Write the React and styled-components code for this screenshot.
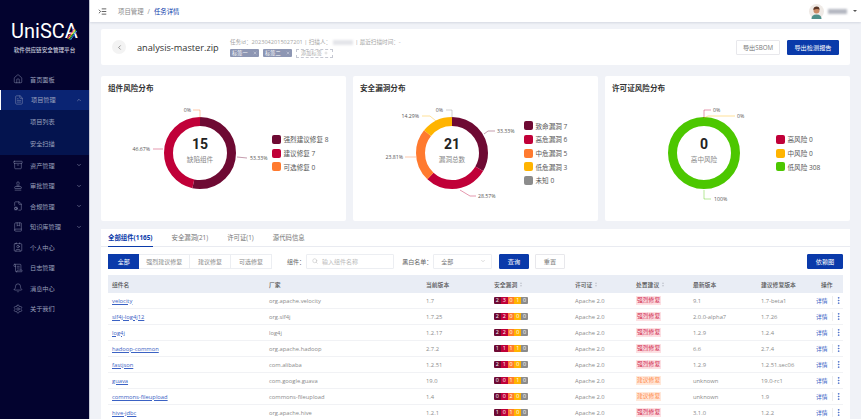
import React from 'react';
import styled, { createGlobalStyle } from 'styled-components';
import {
    House, FileText, Archive, Stamp, FileCog, BookMarked, Contact, ScrollText, Bell, Settings,
    ChevronUp, ChevronDown, ChevronLeft, Search, EllipsisVertical, Indent, X, Plus
} from 'lucide-react';

const FONT = '"Open Sans", "Noto Sans CJK SC", sans-serif';
const BLUE = '#0a3aaa';
const COLORS = {
    dark: '#6e0a33',
    red: '#c00038',
    orange: '#ff7a2f',
    yellow: '#ffb400',
    gray: '#8c8c8c',
    green: '#4cc700'
};

const GlobalStyle = createGlobalStyle`
    html, body {
        margin: 0;
        height: 419px;
        overflow: hidden;
        background: #f0f2f7;
        font-family: ${FONT};
    }
    * {
        box-sizing: border-box;
    }
`;

const Page = styled.div`
    display: flex;
    width: 861px;
    height: 419px;
    overflow: hidden;
`;

const Sidebar = styled.aside`
    flex: 0 0 90px;
    background: #03032f;
    border-right: 1px solid #c9ccd8;
    color: #9aa0bc;
`;

const Logo = styled.div`
    position: relative;
    height: 69px;
    padding-top: 18px;
    text-align: center;
`;

const LogoName = styled.div`
    color: #fff;
    font-family: Roboto, sans-serif;
    font-size: 20px;
    font-weight: 400;
    line-height: 26px;
`;

const LogoSub = styled.div`
    margin-top: 2px;
    color: #c5c9da;
    font-size: 5.6px;
    font-weight: 500;
    line-height: 8px;
    white-space: nowrap;
`;

const Rainbow = styled.svg`
    position: absolute;
    left: 67px;
    top: 28px;
`;

const MenuRow = styled.div`
    display: flex;
    align-items: center;
    height: ${props => props.$sub ? '21.5px' : '20.5px'};
    padding-left: ${props => props.$sub ? '30px' : '13px'};
    background: ${props => props.$active ? '#0a2473' : props.$sub ? '#04144f' : 'transparent'};
    border-left: ${props => props.$active ? '1px solid #fff' : 'none'};
    font-size: 6.2px;

    & > svg:first-child {
        flex: none;
        margin-right: 7px;
    }
`;

const MenuChevron = styled.span`
    display: flex;
    margin-left: auto;
    margin-right: 7px;
`;

const SubGroup = styled.div`
    padding: 1px 0;
    background: #04144f;
`;

const Main = styled.main`
    flex: 1;
    min-width: 0;
    display: flex;
    flex-direction: column;
`;

const Topbar = styled.header`
    flex: 0 0 22px;
    display: flex;
    align-items: center;
    padding: 0 4px 0 8px;
    background: #fff;
    box-shadow: 0 1px 2px rgba(20, 30, 70, 0.12);
    font-size: 6.4px;
    color: #888;
`;

const Crumbs = styled.div`
    display: flex;
    gap: 4px;
    margin-left: 11px;

    & b {
        font-weight: 400;
        color: ${BLUE};
    }
`;

const UserBox = styled.div`
    display: flex;
    align-items: center;
    margin-left: auto;
    gap: 4px;
`;

const BlurName = styled.span`
    display: inline-block;
    width: ${props => props.$w}px;
    height: 5px;
    background: ${props => props.$c || '#b5b8c2'};
    filter: blur(1.2px);
`;

const Caret = styled.span`
    width: 0;
    height: 0;
    margin-left: 2px;
    border: 2px solid transparent;
    border-top: 2.5px solid #555;
    border-bottom: 0;
`;

const Content = styled.div`
    flex: 1;
    display: flex;
    flex-direction: column;
    padding: 7px 11px 0 11px;
`;

const HeaderCard = styled.section`
    flex: 0 0 36px;
    display: flex;
    align-items: center;
    padding: 0 11px 0 11px;
    margin-bottom: 11px;
    background: #fff;
    border-radius: 2px;
`;

const BackButton = styled.span`
    display: flex;
    align-items: center;
    justify-content: center;
    width: 14px;
    height: 14px;
    border-radius: 50%;
    background: #f3f3f3;
    color: #555;
`;

const FileName = styled.h1`
    width: 81px;
    margin: 0 12px 0 11px;
    font-size: 9.2px;
    font-weight: 400;
    color: #333;
    white-space: nowrap;
`;

const Meta = styled.div`
    display: flex;
    flex-direction: column;
    gap: 3px;
    margin-top: 2px;
`;

const MetaLine = styled.div`
    display: flex;
    align-items: center;
    gap: 2px;
    font-size: 5.6px;
    line-height: 7px;
    color: #a5a5a5;
    white-space: nowrap;
`;

const TagLine = styled.div`
    display: flex;
    gap: 4px;
`;

const Tag = styled.span`
    display: flex;
    align-items: center;
    justify-content: space-between;
    width: 29px;
    height: 8px;
    padding: 0 2px;
    border-radius: 1px;
    background: #8d96b3;
    color: #fff;
    font-size: 5.2px;
`;

const AddTag = styled.span`
    display: flex;
    align-items: center;
    justify-content: center;
    gap: 2px;
    width: 37px;
    height: 9px;
    border: 1px dashed #c5c8d2;
    color: #aaa;
    font-size: 5.2px;
`;

const HeaderActions = styled.div`
    display: flex;
    gap: 7px;
    margin-left: auto;
`;

const Button = styled.button`
    width: ${props => props.$w}px;
    height: 15px;
    padding: 0;
    border: 1px solid ${props => props.$primary ? BLUE : '#e8e8ec'};
    border-radius: 1px;
    background: ${props => props.$primary ? BLUE : '#fff'};
    color: ${props => props.$primary ? '#fff' : '#777'};
    font-family: ${FONT};
    font-size: 6.2px;
`;

const ChartRow = styled.div`
    flex: 0 0 145px;
    display: grid;
    grid-template-columns: repeat(3, 245px);
    gap: 7px;
    margin-bottom: 8px;
`;

const ChartCard = styled.section`
    background: #fff;
    border-radius: 2px;
`;

const ChartTitle = styled.h2`
    height: 24px;
    margin: 0;
    padding: 7px 0 0 7px;
    font-size: 7.6px;
    line-height: 10px;
    font-weight: 700;
    color: #333;
`;

const ChartBody = styled.div`
    display: flex;
    align-items: center;
    height: 121px;
`;

const ChartSvg = styled.svg`
    flex: 0 0 171px;
`;

const Legend = styled.ul`
    display: flex;
    flex-direction: column;
    gap: 4.7px;
    margin: 0 0 15px;
    padding: 0;
    list-style: none;
`;

const LegendItem = styled.li`
    display: flex;
    align-items: center;
    gap: 2.5px;
    height: 9px;
    font-size: 6.6px;
    color: #555;
    white-space: nowrap;
`;

const Swatch = styled.i`
    width: 9px;
    height: 9px;
    border-radius: 2px;
    background: ${props => props.$c};
`;

const SliceLabel = styled.text`
    font-size: 5.2px;
    fill: #555;
`;

const CenterValue = styled.text`
    font-size: 14px;
    font-weight: 700;
    fill: #222;
    font-family: Roboto, sans-serif;
`;

const CenterLabel = styled.text`
    font-size: 6.6px;
    fill: #888;
`;

const TableCard = styled.section`
    flex: 1;
    min-height: 0;
    padding: 0 7px;
    overflow: hidden;
    background: #fff;
`;

const Tabs = styled.nav`
    display: flex;
    gap: 19px;
    height: 18px;
    margin: 0 -7px;
    padding: 0 7px;
    border-bottom: 1px solid #e9ebf1;
`;

const TabItem = styled.span`
    padding-top: 4px;
    height: 18px;
    border-bottom: ${props => props.$active ? `1.5px solid ${BLUE}` : 'none'};
    color: ${props => props.$active ? BLUE : '#777'};
    font-size: 6.4px;
    font-weight: ${props => props.$active ? 700 : 400};
    white-space: nowrap;
`;

const FilterRow = styled.div`
    display: flex;
    align-items: center;
    height: 16px;
    margin-top: 6px;
    font-size: 6px;
    color: #666;
`;

const Segment = styled.span`
    display: flex;
    align-items: center;
    justify-content: center;
    width: ${props => props.$w}px;
    height: 15px;
    background: ${props => props.$active ? BLUE : '#fff'};
    border: 1px solid ${props => props.$active ? BLUE : '#eceef2'};
    border-left-width: ${props => props.$active ? '1px' : '0'};
    color: ${props => props.$active ? '#fff' : '#888'};
`;

const FilterLabel = styled.span`
    margin-left: ${props => props.$ml}px;
    margin-right: 1px;
    white-space: nowrap;
`;

const Field = styled.span`
    display: flex;
    align-items: center;
    gap: 4px;
    width: ${props => props.$w}px;
    height: 15px;
    padding: 0 5px;
    border: 1px solid #eceef2;
    border-radius: 1px;
    color: #bbb;

    & > svg:last-child:not(:first-child) {
        margin-left: auto;
    }
`;

const FieldValue = styled.span`
    color: #777;
    margin-left: 2px;
`;

const Push = styled.span`
    margin-left: ${props => props.$ml}px;
    display: flex;
`;

const GRID = '157px 157px 68px 81px 61px 57px 68px 55px 31px';

const HeadRow = styled.div`
    display: grid;
    grid-template-columns: ${GRID};
    align-items: center;
    height: 18px;
    margin-top: 6px;
    background: #e9edf5;
    font-size: 5.8px;
    font-weight: 500;
    color: #555;
`;

const HeadCell = styled.span`
    display: flex;
    align-items: center;
    gap: 3px;
    padding-left: ${props => props.$pl || 4}px;
    white-space: nowrap;
`;

const SortIcon = styled.span`
    display: flex;
    flex-direction: column;
    gap: 1px;

    &:before, &:after {
        content: '';
        width: 0;
        height: 0;
        border: 1.5px solid transparent;
    }
    &:before {
        border-top: 0;
        border-bottom: 2px solid #c2c6d0;
    }
    &:after {
        border-bottom: 0;
        border-top: 2px solid #c2c6d0;
    }
`;

const Row = styled.div`
    display: grid;
    grid-template-columns: ${GRID};
    align-items: center;
    height: 16px;
    border-bottom: 1px solid #f1f2f5;
    font-size: 5.8px;
    color: #8a8a8a;
`;

const Cell = styled.span`
    display: flex;
    align-items: center;
    padding-left: 4px;
    white-space: nowrap;
`;

const NameLink = styled.a`
    color: #3b62c4;
    text-decoration: underline;
`;

const VulnBar = styled.span`
    display: flex;
    border-radius: 1px;
    overflow: hidden;
`;

const VulnCell = styled.span`
    width: 6.8px;
    height: 7px;
    background: ${props => props.$c};
    color: #fff;
    font-size: 5.4px;
    line-height: 7px;
    text-align: center;
`;

const Advice = styled.span`
    padding: 0 1px;
    height: 9px;
    line-height: 9px;
    font-size: 5.8px;
    background: ${props => props.$strong ? '#fde0e3' : '#ffe8da'};
    color: ${props => props.$strong ? '#d0264f' : '#ff8a4c'};
`;

const DetailLink = styled.a`
    color: #3b62c4;
    padding-right: 4px;
    border-right: 1px solid #eee;
`;

const MoreIcon = styled(EllipsisVertical)`
    margin-left: 1px;
    color: #3b62c4;
`;

const MENU = [
    { label: '首页面板', Icon: House },
    { label: '项目管理', Icon: FileText, active: true, open: true, children: ['项目列表', '安全扫描'] },
    { label: '资产管理', Icon: Archive, arrow: true },
    { label: '审批管理', Icon: Stamp, arrow: true },
    { label: '合规管理', Icon: FileCog, arrow: true },
    { label: '知识库管理', Icon: BookMarked, arrow: true },
    { label: '个人中心', Icon: Contact },
    { label: '日志管理', Icon: ScrollText },
    { label: '消息中心', Icon: Bell },
    { label: '关于我们', Icon: Settings }
];

const CHARTS = [
    {
        title: '组件风险分布',
        value: '15',
        label: '缺陷组件',
        slices: [[53.33, COLORS.dark], [46.67, COLORS.red]],
        legend: [['强烈建议修复 8', COLORS.dark], ['建议修复 7', COLORS.red], ['可选修复 0', COLORS.orange]],
        leaders: [
            { pts: '92,34 99,34 99,42', c: COLORS.orange, text: '0%', x: 90, y: 34, end: true },
            { pts: '136,81 146,82', c: COLORS.dark, text: '53.33%', x: 149, y: 82 },
            { pts: '52,73 62,73', c: COLORS.red, text: '46.67%', x: 49, y: 73, end: true }
        ]
    },
    {
        title: '安全漏洞分布',
        value: '21',
        label: '漏洞总数',
        slices: [[33.33, COLORS.dark], [28.57, COLORS.red], [23.81, COLORS.orange], [14.29, COLORS.yellow]],
        legend: [
            ['致命漏洞 7', COLORS.dark], ['高危漏洞 6', COLORS.red], ['中危漏洞 5', COLORS.orange],
            ['低危漏洞 3', COLORS.yellow], ['未知 0', COLORS.gray]
        ],
        leaders: [
            { pts: '93,34 99,34 99,42', c: COLORS.gray, text: '0%', x: 90, y: 34, end: true },
            { pts: '131,58 135,55 142,55', c: COLORS.dark, text: '33.33%', x: 144, y: 55 },
            { pts: '107,114 117,120 123,120', c: COLORS.red, text: '28.57%', x: 125, y: 120 },
            { pts: '52,81 63,81', c: COLORS.orange, text: '23.81%', x: 50, y: 81, end: true },
            { pts: '69,40 77,40 83,45', c: COLORS.yellow, text: '14.29%', x: 66, y: 40, end: true }
        ]
    },
    {
        title: '许可证风险分布',
        value: '0',
        label: '高中风险',
        slices: [[100, COLORS.green]],
        legend: [['高风险 0', COLORS.red], ['中风险 0', COLORS.yellow], ['低风险 308', COLORS.green]],
        leaders: [
            { pts: '99,42 99,34 106,34', c: COLORS.red, text: '0%', x: 108, y: 34 },
            { pts: '99,42 103,40 130,40', c: COLORS.yellow, text: '0%', x: 132, y: 40 },
            { pts: '99,114 99,123 106,123', c: COLORS.green, text: '100%', x: 109, y: 123 }
        ]
    }
];

const ROWS = [
    ['velocity', 'org.apache.velocity', '1.7', [2, 3, 0, 1, 0], true, '9.1', '1.7-beta1'],
    ['slf4j-log4j12', 'org.slf4j', '1.7.25', [2, 2, 0, 0, 0], true, '2.0.0-alpha7', '1.7.26'],
    ['log4j', 'log4j', '1.2.17', [2, 2, 0, 0, 0], true, '1.2.9', '1.2.4'],
    ['hadoop-common', 'org.apache.hadoop', '2.7.2', [1, 1, 1, 1, 0], true, '6.6', '2.7.4'],
    ['fastjson', 'com.alibaba', '1.2.51', [2, 1, 0, 0, 0], true, '1.2.9', '1.2.51.sec06'],
    ['guava', 'com.google.guava', '19.0', [0, 0, 1, 1, 0], false, 'unknown', '19.0-rc1'],
    ['commons-fileupload', 'commons-fileupload', '1.4', [0, 0, 2, 0, 0], false, 'unknown', '1.9'],
    ['hive-jdbc', 'org.apache.hive', '1.2.1', [1, 0, 1, 0, 0], true, '3.1.0', '1.2.2']
];

const VULN_COLORS = [COLORS.dark, COLORS.red, COLORS.orange, COLORS.yellow, COLORS.gray];
const RADIUS = 31.5;
const CIRCUMFERENCE = 2 * Math.PI * RADIUS;

const Donut = ({ slices, leaders, value, label }) => {
    let offset = 0;
    return (
        <ChartSvg width="171" height="121" viewBox="0 24 171 121">
            {slices.map(([pct, color]) => {
                const len = CIRCUMFERENCE * pct / 100;
                const circle = (
                    <circle
                        key={color}
                        cx="99"
                        cy="77"
                        r={RADIUS}
                        fill="none"
                        stroke={color}
                        strokeWidth="9"
                        strokeDasharray={`${len} ${CIRCUMFERENCE - len}`}
                        strokeDashoffset={-offset}
                        transform="rotate(-90 99 77)"
                    />
                );
                offset += len;
                return circle;
            })}
            {leaders.map(item => (
                <g key={item.pts}>
                    <polyline points={item.pts} fill="none" stroke={item.c} strokeOpacity="0.5" strokeWidth="0.8" />
                    <SliceLabel x={item.x} y={item.y} textAnchor={item.end ? 'end' : 'start'} dominantBaseline="central">
                        {item.text}
                    </SliceLabel>
                </g>
            ))}
            <CenterValue x="99" y="68" textAnchor="middle" dominantBaseline="central">{value}</CenterValue>
            <CenterLabel x="99" y="83" textAnchor="middle" dominantBaseline="central">{label}</CenterLabel>
        </ChartSvg>
    );
};

const Avatar = () => (
    <svg width="15" height="15" viewBox="0 0 15 15">
        <circle cx="7.5" cy="7.5" r="7.5" fill="#efeae6" />
        <path d="M2.5 15c0-3 1.5-4.5 5-4.5s5 1.500 5 4.500z" fill="#4d8f8a" />
        <circle cx="7.5" cy="6.500" r="3" fill="#c98a66" />
        <path d="M4.400 6c-.2-2.600 1.500-3.500 3.300-3.500s3 1.200 2.900 3.300c-1-.9-3.500-1.300-6.200.2z" fill="#5a3524" />
    </svg>
);

const App = () => (
    <Page>
        <GlobalStyle />
        <Sidebar>
            <Logo>
                <LogoName>UniSCA</LogoName>
                <LogoSub>软件供应链安全管理平台</LogoSub>
                <Rainbow width="10" height="12" viewBox="0 0 10 12">
                    <path d="M0.500 10.500L7 1" stroke="#e8408a" strokeWidth="1" />
                    <path d="M1.500 11L8 1.500" stroke="#ffd21f" strokeWidth="1" />
                    <path d="M2.500 11.500L9 2" stroke="#35c24a" strokeWidth="1" />
                    <path d="M3.500 12L9.800 3" stroke="#3b7bf0" strokeWidth="1" />
                </Rainbow>
            </Logo>
            {MENU.map(({ label, Icon, active, open, arrow, children }) => (
                <React.Fragment key={label}>
                    <MenuRow $active={active}>
                        <Icon size={10} strokeWidth={1.1} />
                        {label}
                        {open && <MenuChevron><ChevronUp size={6} /></MenuChevron>}
                        {arrow && <MenuChevron><ChevronDown size={6} /></MenuChevron>}
                    </MenuRow>
                    {children && (
                        <SubGroup>
                            {children.map(child => <MenuRow key={child} $sub>{child}</MenuRow>)}
                        </SubGroup>
                    )}
                </React.Fragment>
            ))}
        </Sidebar>
        <Main>
            <Topbar>
                <Indent size={9} color="#333" strokeWidth={2} />
                <Crumbs>
                    <span>项目管理</span>
                    <span>/</span>
                    <b>任务详情</b>
                </Crumbs>
                <UserBox>
                    <Avatar />
                    <BlurName $w={19} />
                    <Caret />
                </UserBox>
            </Topbar>
            <Content>
                <HeaderCard>
                    <BackButton><ChevronLeft size={7} /></BackButton>
                    <FileName>analysis-master.zip</FileName>
                    <Meta>
                        <MetaLine>
                            任务id：2023042015027201 | 扫描人：<BlurName $w={20} $c="#e4e5ea" /> | 最近扫描时间：-
                        </MetaLine>
                        <TagLine>
                            <Tag>标签一<X size={4} /></Tag>
                            <Tag>标签二<X size={4} /></Tag>
                            <AddTag>添加标签<Plus size={4} /></AddTag>
                        </TagLine>
                    </Meta>
                    <HeaderActions>
                        <Button $w={44}>导出SBOM</Button>
                        <Button $w={52} $primary>导出检测报告</Button>
                    </HeaderActions>
                </HeaderCard>
                <ChartRow>
                    {CHARTS.map(chart => (
                        <ChartCard key={chart.title}>
                            <ChartTitle>{chart.title}</ChartTitle>
                            <ChartBody>
                                <Donut {...chart} />
                                <Legend>
                                    {chart.legend.map(([text, color]) => (
                                        <LegendItem key={text}>
                                            <Swatch $c={color} />
                                            {text}
                                        </LegendItem>
                                    ))}
                                </Legend>
                            </ChartBody>
                        </ChartCard>
                    ))}
                </ChartRow>
                <TableCard>
                    <Tabs>
                        <TabItem $active>全部组件(1165)</TabItem>
                        <TabItem>安全漏洞(21)</TabItem>
                        <TabItem>许可证(1)</TabItem>
                        <TabItem>源代码信息</TabItem>
                    </Tabs>
                    <FilterRow>
                        <Segment $w={32} $active>全部</Segment>
                        <Segment $w={52}>强烈建议修复</Segment>
                        <Segment $w={42}>建议修复</Segment>
                        <Segment $w={42}>可选修复</Segment>
                        <FilterLabel $ml={15}>组件：</FilterLabel>
                        <Field $w={90}><Search size={6} />输入组件名称</Field>
                        <FilterLabel $ml={8}>黑白名单：</FilterLabel>
                        <Field $w={60}><FieldValue>全部</FieldValue><ChevronDown size={6} /></Field>
                        <Push $ml={7}><Button $w={30} $primary>查询</Button></Push>
                        <Push $ml={6}><Button $w={30}>重置</Button></Push>
                        <Push $ml={242}><Button $w={36} $primary>依赖图</Button></Push>
                    </FilterRow>
                    <HeadRow>
                        <HeadCell>组件名</HeadCell>
                        <HeadCell>厂家</HeadCell>
                        <HeadCell>当前版本</HeadCell>
                        <HeadCell>安全漏洞<SortIcon /></HeadCell>
                        <HeadCell>许可证<SortIcon /></HeadCell>
                        <HeadCell>处置建议<SortIcon /></HeadCell>
                        <HeadCell>最新版本</HeadCell>
                        <HeadCell>建议修复版本</HeadCell>
                        <HeadCell $pl={9}>操作</HeadCell>
                    </HeadRow>
                    {ROWS.map(([name, vendor, version, vulns, strong, latest, fix]) => (
                        <Row key={name}>
                            <Cell><NameLink href="#">{name}</NameLink></Cell>
                            <Cell>{vendor}</Cell>
                            <Cell>{version}</Cell>
                            <Cell>
                                <VulnBar>
                                    {vulns.map((count, i) => (
                                        <VulnCell key={i} $c={VULN_COLORS[i]}>{count}</VulnCell>
                                    ))}
                                </VulnBar>
                            </Cell>
                            <Cell>Apache 2.0</Cell>
                            <Cell><Advice $strong={strong}>{strong ? '强烈修复' : '建议修复'}</Advice></Cell>
                            <Cell>{latest}</Cell>
                            <Cell>{fix}</Cell>
                            <Cell>
                                <DetailLink>详情</DetailLink>
                                <MoreIcon size={9} />
                            </Cell>
                        </Row>
                    ))}
                </TableCard>
            </Content>
        </Main>
    </Page>
);

export default App;
